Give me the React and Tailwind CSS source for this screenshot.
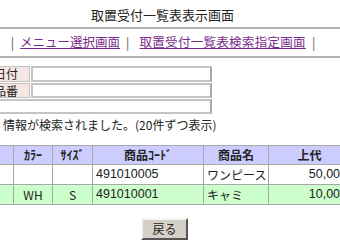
const ROWS = [
  { color: '', size: '', code: '491010005', name: 'ワンピース', price: '50,000', bg: 'bg-white' },
  { color: 'WH', size: 'S', code: '491010001', name: 'キャミ', price: '10,000', bg: 'bg-[#ccffcc]' },
];

const cell = 'border border-[#a8a8a8] px-[3px]';

export default function App() {
  return (
    <div className="w-[340px] h-[240px] overflow-hidden bg-white text-[#222] font-['Noto_Sans_CJK_JP',sans-serif]">
      {/* Title */}
      <div className="h-[27px] pt-[3px] pr-[15px] flex items-center justify-center text-[13px]">
        取置受付一覧表表示画面
      </div>
      <div className="h-[2px] bg-[#b4b4b4]" />

      {/* Links */}
      <div className="h-[27px] pr-[14px] flex items-center justify-center gap-[6px] text-[12.5px]">
        <span className="text-[#555]">|</span>
        <a href="#" className="text-[#7a2a8c] underline">メニュー選択画面</a>
        <span className="text-[#555]">|</span>
        <a href="#" className="ml-[4px] text-[#7a2a8c] underline tracking-[0.3px]">取置受付一覧表検索指定画面</a>
        <span className="text-[#555]">|</span>
      </div>
      <div className="h-[2px] bg-[#b4b4b4]" />

      {/* Search conditions */}
      <div className="mt-[8px] ml-[-12px] w-[224px] flex flex-col gap-[1px] text-[12px]">
        <div className="h-[16px] flex gap-[1px]">
          <div className="w-[42px] bg-[#f8e6e6] border border-[#c0c0c0] pl-[5px] leading-[14px]">日付</div>
          <div className="flex-1 border-2 border-[#c4c4c4] border-r-[#a8a8a8]" />
        </div>
        <div className="h-[15px] flex gap-[1px]">
          <div className="w-[42px] bg-[#f8e6e6] border border-[#c0c0c0] pl-[5px] leading-[13px]">品番</div>
          <div className="flex-1 border-2 border-[#c4c4c4] border-r-[#a8a8a8]" />
        </div>
        <div className="h-[15px] border-2 border-[#c4c4c4] border-r-[#a8a8a8]" />
      </div>

      <div className="mt-[3px] ml-[3px] h-[16px] leading-[16px] text-[12px] whitespace-nowrap">
        情報が検索されました。(20件ずつ表示)
      </div>

      {/* Result table */}
      <table className="mt-[12px] ml-[-28px] w-[378px] min-w-[378px] table-fixed border-collapse text-[12px] whitespace-nowrap">
        <thead>
          <tr className="h-[16px] bg-[#ccccff]">
            <th className={`${cell} w-[41px]`} />
            <th className={`${cell} w-[39px] font-bold`}>ｶﾗｰ</th>
            <th className={`${cell} w-[40px] font-bold`}>ｻｲｽﾞ</th>
            <th className={`${cell} w-[111px] font-bold`}>商品ｺｰﾄﾞ</th>
            <th className={`${cell} w-[65px] font-bold`}>商品名</th>
            <th className={`${cell} w-[82px] font-bold`}>上代</th>
          </tr>
        </thead>
        <tbody>
          {ROWS.map((r) => (
            <tr key={r.code} className={`h-[20px] ${r.bg}`}>
              <td className={cell} />
              <td className={`${cell} text-center`}>{r.color}</td>
              <td className={`${cell} text-center`}>{r.size}</td>
              <td className={`${cell} text-left font-['Liberation_Sans',sans-serif] text-[12.5px]`}>{r.code}</td>
              <td className={`${cell} text-left`}>{r.name}</td>
              <td className={`${cell} text-right font-['Liberation_Sans',sans-serif] text-[12.5px]`}>{r.price}</td>
            </tr>
          ))}
        </tbody>
      </table>

      {/* Back button */}
      <div className="mt-[13px] flex justify-center pr-[11px]">
        <button className="w-[47px] h-[22px] bg-[#d4d0c8] border-2 border-t-[#f4f4f4] border-l-[#f4f4f4] border-r-[#555] border-b-[#555] text-[12px] leading-none">
          戻る
        </button>
      </div>
    </div>
  );
}
